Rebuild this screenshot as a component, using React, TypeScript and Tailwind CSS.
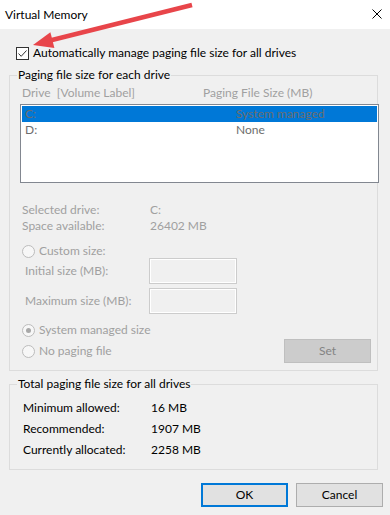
import React from "react";

const font = { fontFamily: "Lato, 'Noto Sans', 'Liberation Sans', sans-serif" };

function Radio({ checked = false }: { checked?: boolean }) {
  return (
    <span className="flex h-[13px] w-[13px] items-center justify-center rounded-full border border-[#bcbcbc] bg-[#f7f7f7]">
      {checked && <span className="h-[5px] w-[5px] rounded-full bg-[#a8a8a8]" />}
    </span>
  );
}

function SizeInput({ label, mt }: { label: string; mt: string }) {
  return (
    <div className={`flex h-[26px] items-center ${mt}`}>
      <span className="w-[139px] pl-[15px] text-[#a0a0a0]">{label}</span>
      <div className="h-[26px] w-[88px] border border-[#cccccc] bg-[#f0f0f0] shadow-[inset_0_0_0_1px_#ffffff]" />
    </div>
  );
}

export default function App() {
  return (
    <div
      className="relative h-[515px] w-[390px] overflow-hidden bg-[#f0f0f0] text-[12px] leading-[16px] text-black"
      style={font}
    >
      {/* title bar */}
      <div className="flex h-[29px] items-center justify-between bg-white pl-[5px] pr-[8px]">
        <span>Virtual Memory</span>
        <svg width="10" height="10" viewBox="0 0 10 10" className="mt-[-1px]">
          <path d="M0.5 0.5 L9.5 9.5 M9.5 0.5 L0.5 9.5" stroke="#000" strokeWidth="1" />
        </svg>
      </div>

      {/* auto manage */}
      <div className="mt-[16px] flex h-[16px] items-center gap-[4px] pl-[16px]">
        <span className="flex h-[13px] w-[13px] items-center justify-center border border-[#333333] bg-white">
          <svg width="11" height="11" viewBox="0 0 11 11">
            <path d="M1.5 5.5 L4.2 8.3 L9.5 2.5" fill="none" stroke="#333" strokeWidth="1" />
          </svg>
        </span>
        <span>Automatically manage paging file size for all drives</span>
      </div>

      {/* paging per drive */}
      <fieldset className="ml-[9px] mt-[6px] w-[369px] min-w-0 border border-[#dcdcdc] p-0 pb-[7px]">
        <legend className="ml-[7px] px-[1px]">Paging file size for each drive</legend>
        <div className="mt-[2px] flex h-[16px] pl-[12px] text-[#a0a0a0]">
          <span className="w-[181px]">Drive&nbsp;&nbsp;[Volume Label]</span>
          <span>Paging File Size (MB)</span>
        </div>
        <div className="ml-[10px] mt-[3px] h-[79px] w-[359px] border border-[#828790] bg-white p-[1px]">
          <div className="flex h-[16px] bg-[#0078d7] text-[#6d6d6d]">
            <span className="w-[214px] pl-[3px]">C:</span>
            <span>System managed</span>
          </div>
          <div className="flex h-[16px] text-[#6d6d6d]">
            <span className="w-[214px] pl-[3px]">D:</span>
            <span>None</span>
          </div>
        </div>

        <div className="mt-[19px] pl-[12px] text-[#a0a0a0]">
          <div className="flex">
            <span className="w-[128px]">Selected drive:</span>
            <span>C:</span>
          </div>
          <div className="flex">
            <span className="w-[128px]">Space available:</span>
            <span>26402 MB</span>
          </div>
        </div>

        <div className="mt-[10px] flex h-[14px] items-center gap-[4px] pl-[12px] text-[#a0a0a0]">
          <Radio />
          <span>Custom size:</span>
        </div>
        <SizeInput label="Initial size (MB):" mt="mt-0" />
        <SizeInput label="Maximum size (MB):" mt="mt-[4px]" />

        <div className="mt-[9px] flex justify-between pr-[6px]">
          <div className="flex flex-col gap-[7px] pl-[12px] text-[#a0a0a0]">
            <div className="flex h-[14px] items-center gap-[4px]">
              <Radio checked />
              <span>System managed size</span>
            </div>
            <div className="flex h-[14px] items-center gap-[4px]">
              <Radio />
              <span>No paging file</span>
            </div>
          </div>
          <button
            type="button"
            disabled
            className="mt-[16px] h-[24px] w-[87px] border border-[#bfbfbf] bg-[#cccccc] text-[#838383]"
          >
            Set
          </button>
        </div>
      </fieldset>

      {/* totals */}
      <fieldset className="ml-[9px] mt-[5px] w-[369px] min-w-0 border border-[#dcdcdc] p-0 pb-[9px]">
        <legend className="ml-[7px] px-[1px]">Total paging file size for all drives</legend>
        <div className="mt-[5px] pl-[13px]">
          {[
            ["Minimum allowed:", "16 MB"],
            ["Recommended:", "1907 MB"],
            ["Currently allocated:", "2258 MB"],
          ].map(([k, v]) => (
            <div key={k} className="flex h-[21px] items-center">
              <span className="w-[128px]">{k}</span>
              <span>{v}</span>
            </div>
          ))}
        </div>
      </fieldset>

      <div className="mt-[13px] flex justify-end gap-[8px] pr-[7px]">
        <button type="button" className="h-[24px] w-[87px] border-2 border-[#0078d7] bg-[#e1e1e1]">
          OK
        </button>
        <button type="button" className="h-[24px] w-[87px] border border-[#adadad] bg-[#e1e1e1]">
          Cancel
        </button>
      </div>

      {/* red annotation arrow */}
      <svg className="pointer-events-none absolute left-0 top-0" width="200" height="60" viewBox="0 0 200 60">
        <line x1="192" y1="5" x2="50" y2="40.5" stroke="#e8454a" strokeWidth="4.5" strokeLinecap="butt" />
        <polygon points="33,45 54.4,47.9 50.4,32.3" fill="#e8454a" />
      </svg>
    </div>
  );
}
